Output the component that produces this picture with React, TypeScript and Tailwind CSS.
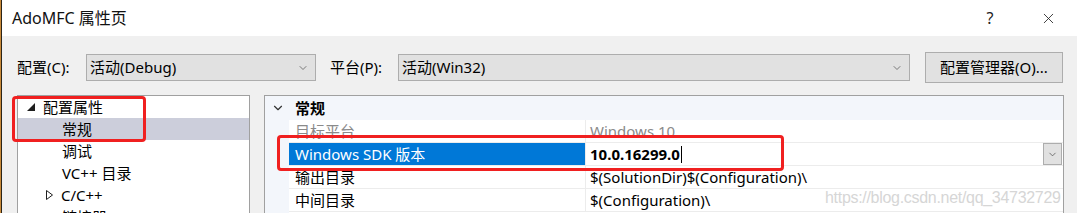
import { ChevronDown, X } from 'lucide-react';

const font = { fontFamily: '"Noto Sans", "Noto Sans CJK SC", sans-serif' };

const treeItems = [
  { label: '配置属性', level: 0, arrow: 'open' },
  { label: '常规', level: 1, selected: true },
  { label: '调试', level: 1 },
  { label: 'VC++ 目录', level: 1 },
  { label: 'C/C++', level: 0, arrow: 'closed', indent: true },
  { label: '链接器', level: 1 },
];

const rows = [
  { name: '目标平台', value: 'Windows 10', muted: true },
  { name: 'Windows SDK 版本', value: '10.0.16299.0', selected: true },
  { name: '输出目录', value: '$(SolutionDir)$(Configuration)\\' },
  { name: '中间目录', value: '$(Configuration)\\' },
];

function Combo({ text, width }: { text: string; width: string }) {
  return (
    <div className={`${width} h-[27px] flex items-center justify-between bg-[#e1e1e1] border border-[#adadad] pl-[3px] pr-[6px]`}>
      <span className="text-[15px] text-black">{text}</span>
      <ChevronDown size={12} strokeWidth={1.5} className="text-[#555]" />
    </div>
  );
}

export default function App() {
  return (
    <div className="relative w-[1077px] h-[213px] overflow-hidden flex bg-white" style={font}>
      <div className="w-[1px] bg-[#c98a3a]" />
      <div className="w-[1px] bg-[#2b2418]" />
      <div className="flex-1 flex flex-col">
        {/* title bar */}
        <div className="h-[36px] flex items-center bg-white shrink-0">
          <span className="pl-[10px] text-[16px] text-[#111] flex-1">AdoMFC 属性页</span>
          <span className="w-[20px] text-center text-[16px] text-[#222] mr-[40px]">?</span>
          <X size={17} strokeWidth={1.2} className="text-[#222] mr-[20px]" />
        </div>

        <div className="flex-1 bg-[#f0f0f0] flex flex-col">
          {/* toolbar */}
          <div className="mt-[16px] h-[31px] flex items-center shrink-0">
            <span className="ml-[15px] w-[69px] text-[15px] text-black">配置(C):</span>
            <Combo text="活动(Debug)" width="w-[230px]" />
            <span className="ml-[14px] w-[68px] text-[15px] text-black">平台(P):</span>
            <Combo text="活动(Win32)" width="w-[512px]" />
            <div className="ml-[15px] w-[138px] h-[31px] flex items-center justify-center bg-[#e1e1e1] border border-[#adadad] text-[15px] text-black">
              配置管理器(O)...
            </div>
          </div>

          {/* panels */}
          <div className="mt-[12px] flex flex-1">
            {/* tree */}
            <div className="ml-[15px] w-[233px] border-l border-t border-r border-[#a0a0a0] bg-white flex flex-col">
              {treeItems.map((it) => (
                <div
                  key={it.label}
                  className={`h-[22px] shrink-0 flex items-center text-[15px] text-black ${it.selected ? 'bg-[#cccedb]' : ''}`}
                >
                  {it.arrow === 'open' && (
                    <svg width="8" height="8" viewBox="0 0 8 8" className="ml-[9px] mr-[8px]">
                      <polygon points="8,0 8,8 0,8" fill="#1e1e1e" />
                    </svg>
                  )}
                  {it.arrow === 'closed' && (
                    <svg width="7" height="10" viewBox="0 0 7 10" className="ml-[28px] mr-[8px]">
                      <polygon points="0.5,0.5 6.5,5 0.5,9.5" fill="none" stroke="#1e1e1e" strokeWidth="1" />
                    </svg>
                  )}
                  <span className={it.level === 1 ? 'ml-[44px]' : ''}>{it.label}</span>
                </div>
              ))}
            </div>

            {/* property grid */}
            <div className="ml-[14px] w-[800px] border-l border-t border-r border-[#a0a0a0] bg-white flex flex-col">
              <div className="h-[24px] shrink-0 flex items-center bg-[#f3f6fb]">
                <ChevronDown size={14} strokeWidth={2} className="ml-[6px] text-[#333]" />
                <span className="ml-[10px] text-[15px] font-bold text-black">常规</span>
              </div>
              <div className="flex flex-1">
                <div className="w-[24px] bg-[#f3f6fb] shrink-0" />
                <div className="flex-1 flex flex-col">
                  {rows.map((r) => (
                    <div key={r.name} className="h-[23px] shrink-0 flex border-b border-[#ececec]">
                      <div
                        className={`w-[297px] flex items-center pl-[6px] text-[15px] border-r border-[#ececec] ${
                          r.selected ? 'bg-[#0078d7] text-white' : r.muted ? 'text-[#8a8a8a]' : 'text-black'
                        }`}
                      >
                        {r.name}
                      </div>
                      <div className="flex-1 flex items-center pl-[4px] text-[15px]">
                        {r.selected ? (
                          <>
                            <span className="font-bold text-black">{r.value}</span>
                            <span className="ml-[1px] w-[1px] h-[17px] bg-black" />
                            <span className="flex-1" />
                            <span className="w-[19px] h-[22px] flex items-center justify-center bg-[#e1e1e1] border border-[#adadad] mr-[1px]">
                              <ChevronDown size={11} strokeWidth={1.5} className="text-[#444]" />
                            </span>
                          </>
                        ) : (
                          <span className={r.muted ? 'text-[#8a8a8a]' : 'text-black'}>{r.value}</span>
                        )}
                      </div>
                    </div>
                  ))}
                </div>
              </div>
            </div>
          </div>
        </div>
      </div>

      {/* annotation boxes */}
      <div className="absolute left-[12px] top-[96px] w-[134px] h-[46px] border-[3px] border-[#f02020] rounded-[4px]" />
      <div className="absolute left-[277px] top-[135px] w-[507px] h-[36px] border-[3px] border-[#f02020] rounded-[4px]" />

      {/* watermark */}
      <div
        className="absolute left-[825px] top-[186px] text-[16px] tracking-[-0.3px] text-[#d6d6d6] whitespace-nowrap"
        style={{ fontFamily: '"Liberation Sans", Arial, sans-serif' }}
      >
        https://blog.csdn.net/qq_34732729
      </div>
    </div>
  );
}
